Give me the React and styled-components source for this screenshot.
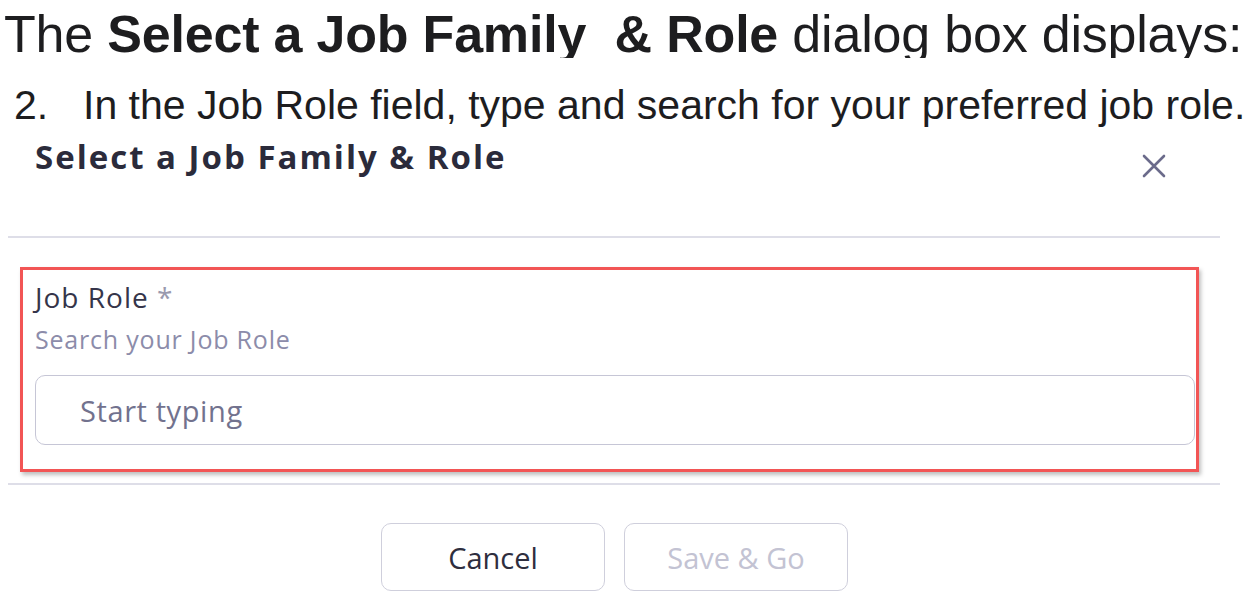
import React from 'react';
import styled, { createGlobalStyle } from 'styled-components';

const GlobalStyle = createGlobalStyle`
  html, body {
    margin: 0;
    padding: 0;
    background: #ffffff;
  }
  * {
    box-sizing: border-box;
  }
`;

// Whole page column
const Page = styled.div`
  width: 1249px;
  height: 600px;
  overflow: hidden;
  display: flex;
  flex-direction: column;
`;

// Document caption lines above the screenshot
const Heading = styled.div`
  height: 58px;
  overflow: hidden;
  padding: 5px 0 0 4px;
  font-family: "Liberation Sans", Arial, sans-serif;
  font-size: 52px;
  line-height: 58px;
  letter-spacing: -0.2px;
  color: #1d1d1f;
  white-space: pre;

  strong {
    font-weight: 700;
  }
`;

const Step = styled.div`
  display: flex;
  margin-top: 24px;
  padding-left: 14px;
  font-family: "Liberation Sans", Arial, sans-serif;
  font-size: 41px;
  line-height: 46px;
  color: #1d1d1f;
  white-space: nowrap;
`;

const StepNumber = styled.span`
  width: 69px;
`;

// Dialog
const Dialog = styled.div`
  width: 1212px;
  margin-left: 8px;
  display: flex;
  flex-direction: column;
  font-family: "Open Sans", "Noto Sans", sans-serif;
`;

const DialogHeader = styled.div`
  display: flex;
  justify-content: space-between;
  align-items: flex-start;
  padding: 7px 54px 0 27px;
  height: 108px;
`;

const Title = styled.h2`
  margin: 0;
  font-size: 33px;
  line-height: 44px;
  font-weight: 700;
  letter-spacing: 2px;
  color: #2b2b3b;
`;

const CloseButton = styled.button`
  margin-top: 19px;
  width: 24px;
  height: 24px;
  padding: 0;
  border: none;
  background: transparent;
  display: flex;
  color: #6b6b8b;
`;

const Divider = styled.hr`
  margin: ${(p) => (p.$top ? `${p.$top}px` : 0)} 0 0;
  border: none;
  border-top: 2px solid #dedee8;
`;

const Highlight = styled.div`
  margin: 29px 21px 0 12px;
  padding: 9px 1px 24px 12px;
  border: 3px solid #f25555;
  box-shadow: 2px 3px 4px rgba(0, 0, 0, 0.25);
  display: flex;
  flex-direction: column;
`;

const Label = styled.label`
  font-size: 28px;
  line-height: 36px;
  letter-spacing: 1px;
  color: #35354a;

  span {
    color: #9a9aae;
  }
`;

const Hint = styled.div`
  margin: 6px 0 18px;
  font-size: 25px;
  line-height: 36px;
  letter-spacing: 0.8px;
  color: #8c8caa;
`;

const Input = styled.input`
  height: 70px;
  width: 100%;
  padding: 0 0 0 44px;
  border: 1.5px solid #c6c6d6;
  border-radius: 10px;
  font-family: "Open Sans", "Noto Sans", sans-serif;
  font-size: 29px;
  letter-spacing: 0.6px;
  color: #35354a;
  outline: none;

  &::placeholder {
    color: #72728e;
  }
`;

const Footer = styled.div`
  display: flex;
  justify-content: center;
  gap: 19px;
  padding-top: 38px;
  padding-left: 1px;
`;

const Button = styled.button`
  width: 224px;
  height: 68px;
  border: 1.5px solid #cfcfdc;
  border-radius: 10px;
  background: #ffffff;
  font-family: "Open Sans", "Noto Sans", sans-serif;
  font-size: 29px;
  color: ${(p) => (p.$disabled ? '#c3c3d3' : '#2e2e3e')};
`;

const CloseIcon = () => (
  <svg width="24" height="24" viewBox="0 0 24 24">
    <path d="M2 2 L22 22 M22 2 L2 22" stroke="currentColor" strokeWidth="2.6" strokeLinecap="round" />
  </svg>
);

export default function App() {
  return (
    <>
      <GlobalStyle />
      <Page>
        <Heading>
          The <strong>Select a Job Family  &amp; Role</strong> dialog box displays:
        </Heading>
        <Step>
          <StepNumber>2.</StepNumber>
          In the Job Role field, type and search for your preferred job role.
        </Step>
        <Dialog>
          <DialogHeader>
            <Title>Select a Job Family &amp; Role</Title>
            <CloseButton aria-label="Close">
              <CloseIcon />
            </CloseButton>
          </DialogHeader>
          <Divider />
          <Highlight>
            <Label>
              Job Role <span>*</span>
            </Label>
            <Hint>Search your Job Role</Hint>
            <Input placeholder="Start typing" />
          </Highlight>
          <Divider $top={11} />
          <Footer>
            <Button>Cancel</Button>
            <Button $disabled>Save &amp; Go</Button>
          </Footer>
        </Dialog>
      </Page>
    </>
  );
}
